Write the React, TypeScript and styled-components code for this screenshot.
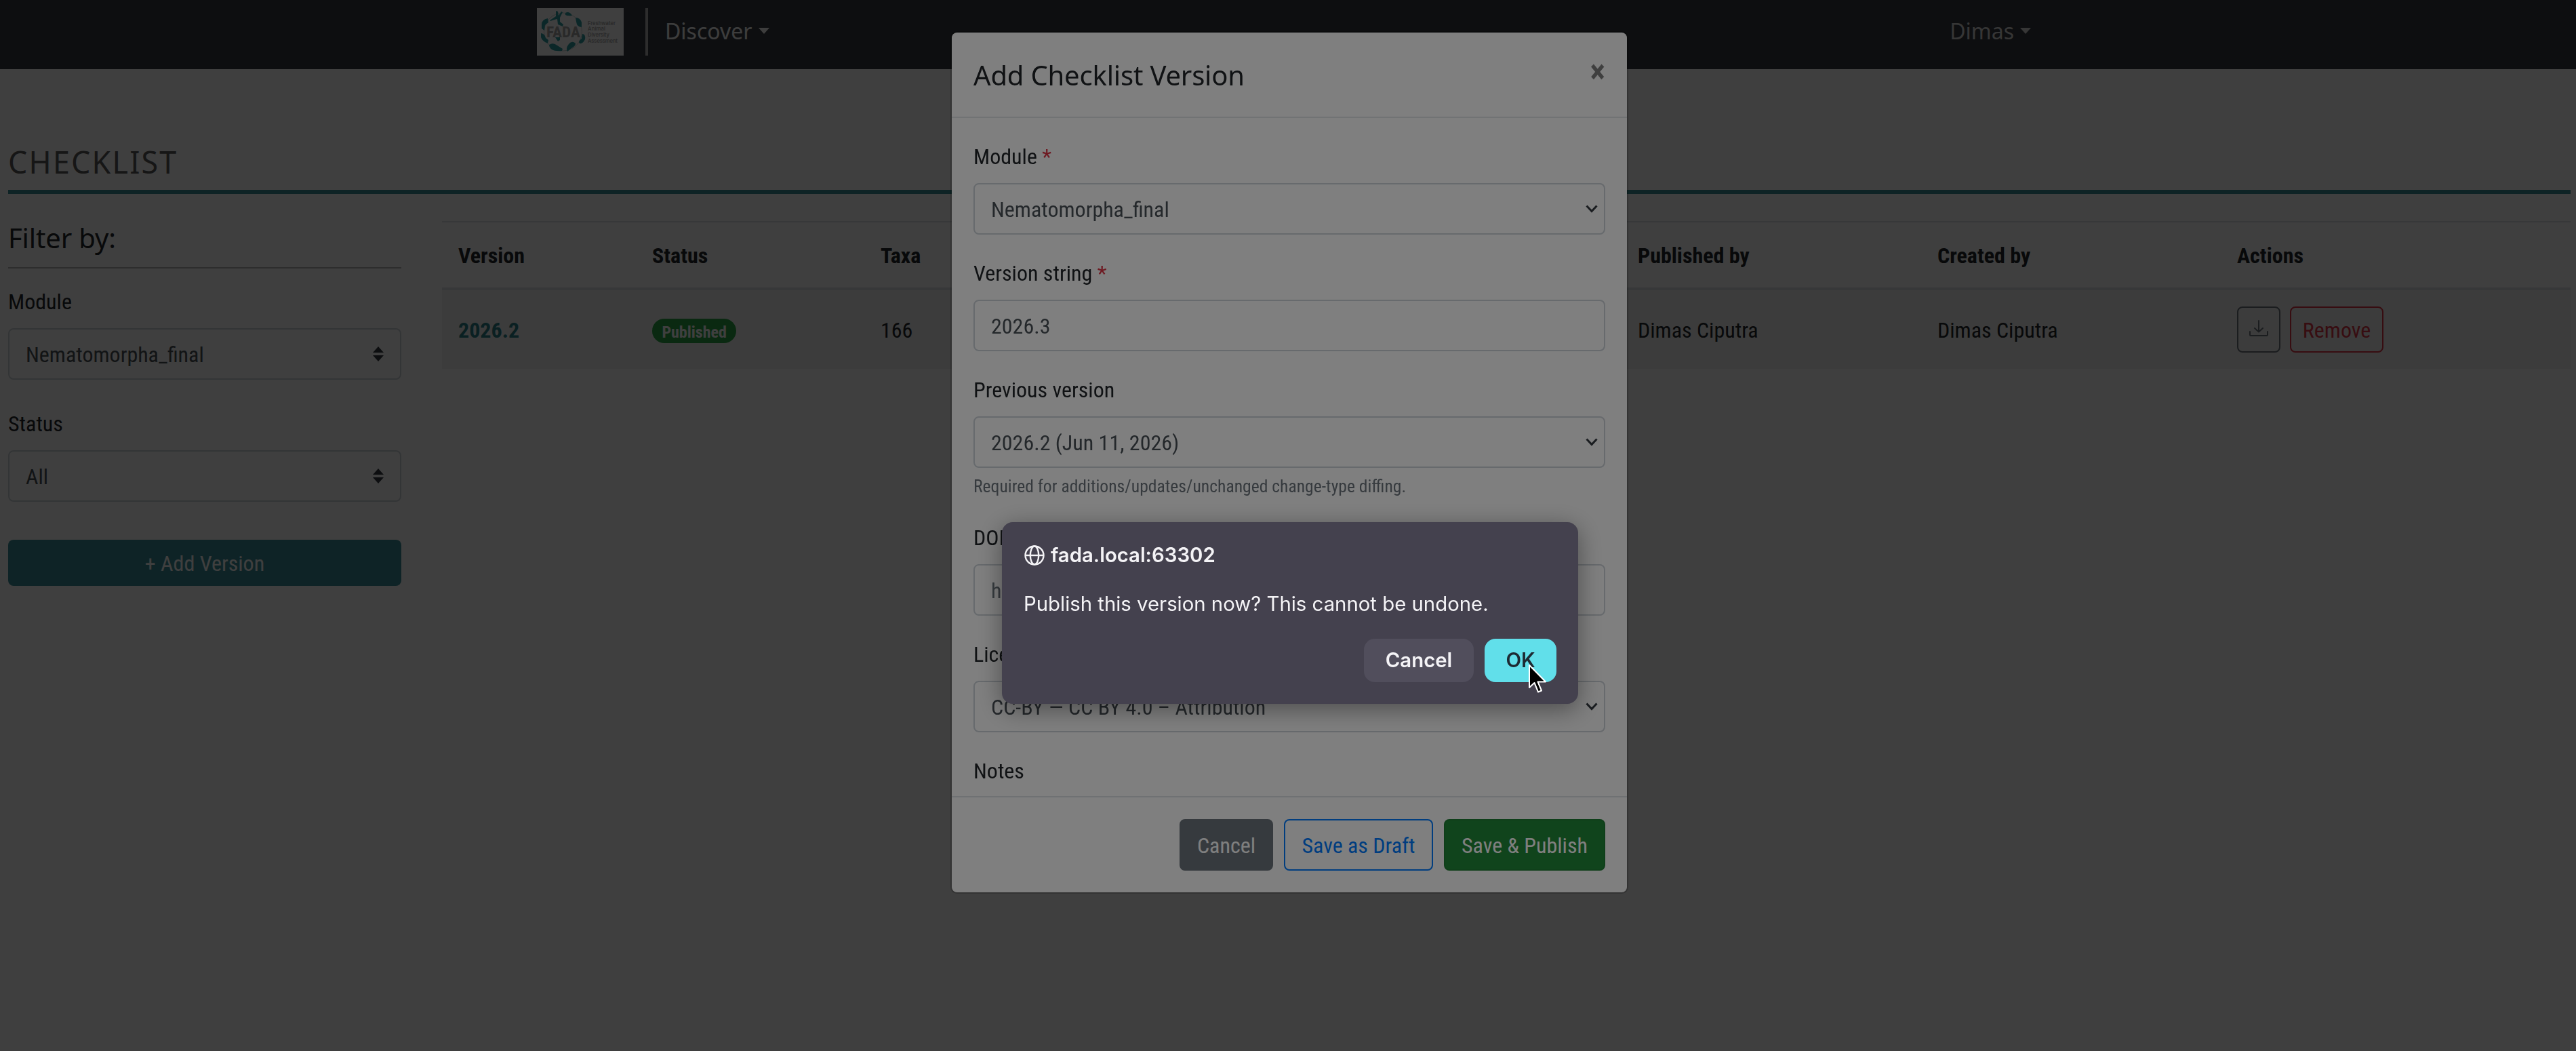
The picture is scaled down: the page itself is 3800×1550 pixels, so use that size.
import React from "react";
import styled, { createGlobalStyle, css } from "styled-components";

const condensed = `"Roboto Condensed", Roboto, "Liberation Sans", sans-serif`;
const heading = `"Noto Sans", "Open Sans", sans-serif`;
const system = `Inter, "Liberation Sans", sans-serif`;

const GlobalStyle = createGlobalStyle`
  *, *::before, *::after { box-sizing: border-box; }
  html, body { margin: 0; padding: 0; background: #fff; }
  body {
    width: 3800px;
    height: 1550px;
    overflow: hidden;
    font-family: ${condensed};
    font-size: 32px;
    line-height: 1.5;
    color: #212529;
  }
  button { font: inherit; margin: 0; }
`;

const Page = styled.div`
  height: 1550px;
  background: #fff;
`;

/* ---------- navigation ---------- */

const Navbar = styled.nav`
  display: flex;
  align-items: flex-start;
  justify-content: space-between;
  height: 102px;
  padding: 12px 804px 0 792px;
  background: #343a40;
  font-family: ${heading};
`;

const NavGroup = styled.div`
  display: flex;
  align-items: flex-start;
`;

const Logo = styled.svg`
  display: block;
  width: 128px;
  height: 70px;
  background: #fff;
`;

const NavDivider = styled.span`
  width: 4px;
  height: 70px;
  margin: 0 25px 0 32px;
  background: #b4b4b4;
`;

const NavLink = styled.a<{ $muted?: boolean }>`
  display: flex;
  align-items: center;
  height: 48px;
  margin-top: 10px;
  color: ${(p) => (p.$muted ? "#d8d8d8" : "#f6f6f6")};

  &::after {
    content: "";
    margin: -2px 0 0 9px;
    border-top: 9px solid;
    border-left: 8px solid transparent;
    border-right: 8px solid transparent;
  }
`;

/* ---------- page body ---------- */

const Content = styled.main`
  padding: 110px 8px 0 12px;
`;

const PageTitle = styled.h1`
  height: 74px;
  margin: 0;
  border-bottom: 6px solid #398c94;
  color: #5a5a5a;
  font: 400 44.8px/53.76px ${heading};
  letter-spacing: 2.2px;
`;

const Columns = styled.div`
  display: grid;
  grid-template-columns: 580px 3140px;
  column-gap: 60px;
  align-items: start;
  margin-top: 40px;
`;

const Sidebar = styled.aside`
  display: flex;
  flex-direction: column;
`;

const SidebarTitle = styled.h2`
  height: 70px;
  margin: 0 0 24px;
  padding-top: 1px;
  border-bottom: 2px solid #b4b4b4;
  font: 400 40px/48px ${heading};
  letter-spacing: -0.15px;
`;

const SidebarField = styled.div`
  margin-bottom: 40px;
`;

const Label = styled.label`
  display: block;
  height: 48px;
  margin-bottom: 16px;
  padding-top: 1px;
`;

const Control = styled.div<{ $wide?: boolean }>`
  display: flex;
  align-items: center;
  justify-content: space-between;
  height: 76px;
  padding: 2px ${(p) => (p.$wide ? "9px" : "24px")} 0 24px;
  border: 2px solid #ced4da;
  border-radius: 8px;
  background: #fff;
  color: #495057;
  white-space: nowrap;

  svg {
    margin-bottom: 2px;
  }
`;

const Placeholder = styled.span`
  color: #6c757d;
`;

const AddButton = styled.button`
  height: 68px;
  margin-top: 16px;
  padding: 2px 0 0;
  border: 0;
  border-radius: 8px;
  background: #3a8f98;
  color: #fff;
`;

/* ---------- versions table ---------- */

const Table = styled.div`
  border-top: 2px solid #dee2e6;
`;

const rowGrid = css`
  display: grid;
  grid-template-columns: 286px 337px 1117px 442px 442px 516px;
`;

const HeadRow = styled.div`
  ${rowGrid}
  height: 100px;
  border-bottom: 4px solid #dee2e6;
  font-weight: 700;
`;

const BodyRow = styled.div`
  ${rowGrid}
  height: 116px;
  background: #f2f2f2;
`;

const Cell = styled.div`
  display: flex;
  align-items: center;
  padding: 2px 24px 0;
`;

const ActionsCell = styled(Cell)`
  gap: 14px;
  padding-top: 0;
`;

const VersionLink = styled.a`
  color: #2b8089;
  font-weight: 700;
`;

const Badge = styled.span`
  height: 36px;
  padding: 8px 14.4px 0;
  margin-top: 2px;
  border-radius: 320px;
  background: #28a745;
  color: #fff;
  font-size: 24px;
  font-weight: 700;
  line-height: 1;
`;

const RowButton = styled.button<{ $color: string; $icon?: boolean }>`
  display: flex;
  align-items: center;
  justify-content: center;
  width: ${(p) => (p.$icon ? "64px" : "138px")};
  height: 68px;
  padding: ${(p) => (p.$icon ? "0 0 4px" : "2px 0 0")};
  border: 2px solid ${(p) => p.$color};
  border-radius: 8px;
  background: transparent;
  color: ${(p) => p.$color};
`;

/* ---------- modal ---------- */

const Shade = styled.div`
  position: fixed;
  inset: 0;
  background: rgba(0, 0, 0, 0.5);
`;

const ModalLayer = styled.div`
  position: fixed;
  inset: 0;
  display: flex;
  align-items: flex-start;
  justify-content: center;
  padding: 46px 0 0 4px;
`;

const Modal = styled.section`
  display: flex;
  flex-direction: column;
  width: 1000px;
  height: 1272px;
  border: 2px solid rgba(0, 0, 0, 0.2);
  border-radius: 9.6px;
  background: #fff;
  background-clip: padding-box;
`;

const ModalHeader = styled.header`
  display: flex;
  justify-content: space-between;
  align-items: flex-start;
  height: 126px;
  padding: 33px 32px 0;
  border-bottom: 2px solid #e3e6e9;
`;

const ModalTitle = styled.h3`
  margin: 0;
  font: 400 40px/60px ${heading};
  letter-spacing: -0.18px;
`;

const CloseButton = styled.button`
  margin-top: 1px;
  padding: 0;
  border: 0;
  background: none;
  color: #000;
  font-size: 48px;
  font-weight: 700;
  line-height: 1;
  text-shadow: 0 2px 0 #fff;
  opacity: 0.5;
`;

const ModalBody = styled.div`
  height: 1000px;
  padding: 32px;
  overflow: hidden;
`;

const Field = styled.div`
  margin-bottom: 32px;
`;

const Required = styled.span`
  color: #dc3545;
`;

const Help = styled.small`
  display: block;
  margin-top: 8px;
  color: #6c757d;
  font-size: 25.6px;
  line-height: 38.4px;
`;

const ModalFooter = styled.footer`
  display: flex;
  justify-content: flex-end;
  gap: 16px;
  height: 142px;
  padding: 32px;
  border-top: 2px solid #dee2e6;
`;

const Button = styled.button<{ $width: number; $bg: string; $border: string; $text: string }>`
  width: ${(p) => p.$width}px;
  height: 76px;
  padding: 2px 0 0;
  border: 2px solid ${(p) => p.$border};
  border-radius: 8px;
  background: ${(p) => p.$bg};
  color: ${(p) => p.$text};
`;

/* ---------- browser confirm prompt ---------- */

const Prompt = styled.div`
  position: fixed;
  left: 1478px;
  top: 770px;
  display: flex;
  flex-direction: column;
  width: 850px;
  height: 268px;
  padding: 31px 32px 32px;
  border-radius: 16px;
  background: #44414e;
  box-shadow: 0 8px 36px rgba(0, 0, 0, 0.4);
  color: #f4f3f6;
  font: 400 29.33px/36px ${system};
`;

const PromptOrigin = styled.div`
  display: flex;
  align-items: center;
  gap: 9px;
  padding-left: 1px;
  font-weight: 600;
`;

const PromptText = styled.p`
  margin: 36px 0 0;
  white-space: nowrap;
`;

const PromptActions = styled.div`
  display: flex;
  justify-content: flex-end;
  gap: 16px;
  margin-top: auto;
`;

const PromptButton = styled.button<{ $primary?: boolean }>`
  width: ${(p) => (p.$primary ? "106px" : "162px")};
  height: 64px;
  padding: 0;
  border: 0;
  border-radius: 16px;
  background: ${(p) => (p.$primary ? "#61dfea" : "#514e5c")};
  color: ${(p) => (p.$primary ? "#1d2a33" : "#f4f3f6")};
  font-weight: 600;
`;

const Pointer = styled.svg`
  position: fixed;
  left: 2253px;
  top: 978px;
  width: 30px;
  height: 46px;
`;

/* ---------- drawings ---------- */

const FadaLogo = () => (
  <Logo viewBox="0 0 128 70">
    <circle cx="38.5" cy="35" r="28" fill="none" stroke="#c4cfcf" strokeWidth="1" />
    <g fill="#2f9ea3">
      <path d="M28 4l3 1 1 6 4-6 2 1-4 8 0 6 5 4-1 3-7-3-1-8-4 1-6 2-1-1 9-6z" />
      <path d="M42 7q6-3 10 4-7 1-10-1z" />
      <path d="M57 14q7 0 9 7l0 7q-7 0-8-8z" />
      <path d="M67 38q5 0 4 8-3 7-8 6-3-3 3-7z" />
      <path d="M47 53q5-6 10-1 0 4-6 7l-6 5q-2-4 0-8z" />
      <path d="M18 54q6-4 12 1l8 5-1 3q-10 1-15-2-4-3-4-7z" />
      <path d="M6 37q6 1 7 7l4 3-1 5q-8-3-10-9z" />
      <path d="M16 15l1 6-5 4-1 8-4-3 0-6q0-7 9-9z" />
      <path d="M27 43l7 0 0 4-3 2z" />
    </g>
    <text x="14" y="42.5" fill="#a6a6a6" fontFamily={condensed} fontSize="22.5" fontWeight="700" textLength="50" lengthAdjust="spacingAndGlyphs">FADA</text>
    <g fill="#a6a6a6" fontFamily={system} fontSize="7.6" fontWeight="600">
      <text x="75" y="24.5" textLength="41">Freshwater</text>
      <text x="75" y="33.2" textLength="26">Animal</text>
      <text x="75" y="42" textLength="32">Diversity</text>
      <text x="75" y="50.5" textLength="44">Assessment</text>
    </g>
  </Logo>
);

const SortArrows = () => (
  <svg width="16" height="22" viewBox="0 0 16 22" fill="#343a40">
    <path d="M0 9L8 0l8 9zM0 13h16l-8 9z" />
  </svg>
);

const Chevron = () => (
  <svg width="18" height="14" viewBox="0 0 18 14" fill="none" stroke="#343a40" strokeWidth="3">
    <path d="M1.5 2.5L9 10.5l7.5-8" />
  </svg>
);

const DownloadIcon = () => (
  <svg width="28" height="24" viewBox="0 0 28 24" fill="none" stroke="currentColor" strokeWidth="2" strokeLinecap="round" strokeLinejoin="round">
    <path d="M1 17v4.500q0 1.500 1.500 1.500h23q1.500 0 1.500-1.500V17M14 1v16.500M8 12l6 5.500 6-5.500" />
  </svg>
);

const GlobeIcon = () => (
  <svg width="30" height="30" viewBox="0 0 30 30" fill="none" stroke="currentColor" strokeWidth="2.4">
    <circle cx="15" cy="15" r="13.5" />
    <ellipse cx="15" cy="15" rx="6.2" ry="13.5" />
    <path d="M1.5 15h27" />
  </svg>
);

const fields = [
  { label: "Module", required: true, value: "Nematomorpha_final", select: true },
  { label: "Version string", required: true, value: "2026.3" },
  {
    label: "Previous version",
    value: "2026.2 (Jun 11, 2026)",
    select: true,
    help: "Required for additions/updates/unchanged change-type diffing.",
  },
  { label: "DOI", placeholder: "h" },
  { label: "License", value: "CC-BY — CC BY 4.0 – Attribution", select: true },
];

export default function App() {
  return (
    <>
      <GlobalStyle />
      <Page>
        <Navbar>
          <NavGroup>
            <FadaLogo />
            <NavDivider />
            <NavLink>Discover</NavLink>
          </NavGroup>
          <NavLink $muted>Dimas</NavLink>
        </Navbar>

        <Content>
          <PageTitle>CHECKLIST</PageTitle>
          <Columns>
            <Sidebar>
              <SidebarTitle>Filter by:</SidebarTitle>
              <SidebarField>
                <Label>Module</Label>
                <Control>
                  Nematomorpha_final
                  <SortArrows />
                </Control>
              </SidebarField>
              <SidebarField>
                <Label>Status</Label>
                <Control>
                  All
                  <SortArrows />
                </Control>
              </SidebarField>
              <AddButton>+ Add Version</AddButton>
            </Sidebar>

            <Table>
              <HeadRow>
                <Cell>Version</Cell>
                <Cell>Status</Cell>
                <Cell>Taxa</Cell>
                <Cell>Published by</Cell>
                <Cell>Created by</Cell>
                <Cell>Actions</Cell>
              </HeadRow>
              <BodyRow>
                <Cell>
                  <VersionLink>2026.2</VersionLink>
                </Cell>
                <Cell>
                  <Badge>Published</Badge>
                </Cell>
                <Cell>166</Cell>
                <Cell>Dimas Ciputra</Cell>
                <Cell>Dimas Ciputra</Cell>
                <ActionsCell>
                  <RowButton $color="#6c757d" $icon>
                    <DownloadIcon />
                  </RowButton>
                  <RowButton $color="#dc3545">Remove</RowButton>
                </ActionsCell>
              </BodyRow>
            </Table>
          </Columns>
        </Content>
      </Page>

      <Shade />
      <ModalLayer>
        <Modal>
          <ModalHeader>
            <ModalTitle>Add Checklist Version</ModalTitle>
            <CloseButton>×</CloseButton>
          </ModalHeader>
          <ModalBody>
            {fields.map((f) => (
              <Field key={f.label}>
                <Label>
                  {f.label} {f.required && <Required>*</Required>}
                </Label>
                <Control $wide>
                  {f.value ?? <Placeholder>{f.placeholder}</Placeholder>}
                  {f.select && <Chevron />}
                </Control>
                {f.help && <Help>{f.help}</Help>}
              </Field>
            ))}
            <Label>Notes</Label>
          </ModalBody>
          <ModalFooter>
            <Button $width={138} $bg="#6c757d" $border="#6c757d" $text="#fff">Cancel</Button>
            <Button $width={220} $bg="#fff" $border="#007bff" $text="#007bff">Save as Draft</Button>
            <Button $width={238} $bg="#218838" $border="#1e7e34" $text="#fff">Save &amp; Publish</Button>
          </ModalFooter>
        </Modal>
      </ModalLayer>

      <Shade />
      <Prompt>
        <PromptOrigin>
          <GlobeIcon />
          fada.local:63302
        </PromptOrigin>
        <PromptText>Publish this version now? This cannot be undone.</PromptText>
        <PromptActions>
          <PromptButton>Cancel</PromptButton>
          <PromptButton $primary>OK</PromptButton>
        </PromptActions>
      </Prompt>
      <Pointer viewBox="0 0 30 46">
        <path
          d="M3 3v33l7.5-7 5.5 13.5 5-2-5.5-13H27z"
          fill="#000"
          stroke="#fff"
          strokeWidth="2"
          strokeLinejoin="round"
        />
      </Pointer>
    </>
  );
}
